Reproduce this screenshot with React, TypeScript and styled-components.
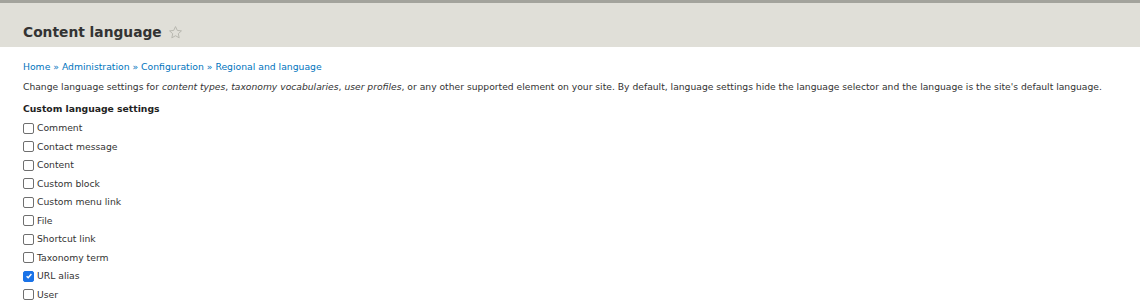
import styled, { createGlobalStyle } from "styled-components";

const GlobalStyle = createGlobalStyle`
  html, body {
    margin: 0;
    padding: 0;
    background: #fff;
  }
  body {
    font-family: "DejaVu Sans", Verdana, sans-serif;
    color: #333;
  }
`;

const Header = styled.header`
  height: 44px;
  border-top: 3px solid #a3a39c;
  background: #e0dfd8;
  display: flex;
  align-items: center;
  padding: 0 23px;
  box-sizing: content-box;
`;

const Title = styled.h1`
  margin: 0;
  padding-top: 14px;
  font-size: 13.8px;
  font-weight: 700;
  color: #333;
  display: flex;
  align-items: center;
  gap: 6px;
`;

const Star = styled.svg`
  width: 15px;
  height: 15px;
`;

const Main = styled.main`
  padding: 14px 23px 0;
`;

const Breadcrumb = styled.nav`
  font-size: 9.25px;
  line-height: 12px;
  color: #0074bd;

  a {
    color: #0074bd;
    text-decoration: none;
  }
`;

const Description = styled.p`
  margin: 8px 0 0;
  font-size: 9.2px;
  line-height: 12px;
  color: #333;
  white-space: nowrap;
`;

const FieldLabel = styled.h4`
  margin: 10px 0 7px;
  font-size: 9.25px;
  line-height: 12px;
  font-weight: 700;
  color: #222;
`;

const Options = styled.div`
  display: flex;
  flex-direction: column;
  gap: 6.5px;
`;

const Option = styled.label`
  display: flex;
  align-items: center;
  gap: 3px;
  font-size: 9.25px;
  line-height: 12px;
  color: #333;
`;

const Box = styled.span<{ $checked?: boolean }>`
  width: 9px;
  height: 9px;
  border-radius: 2px;
  border: 1px solid ${(p) => (p.$checked ? "#1a73e8" : "#6f6f6f")};
  background: ${(p) => (p.$checked ? "#1a73e8" : "#fff")};
  display: inline-flex;
  align-items: center;
  justify-content: center;

  svg {
    width: 8px;
    height: 8px;
  }
`;

const items: { label: string; checked?: boolean }[] = [
  { label: "Comment" },
  { label: "Contact message" },
  { label: "Content" },
  { label: "Custom block" },
  { label: "Custom menu link" },
  { label: "File" },
  { label: "Shortcut link" },
  { label: "Taxonomy term" },
  { label: "URL alias", checked: true },
  { label: "User" },
];

export default function App() {
  return (
    <>
      <GlobalStyle />
      <Header>
        <Title>
          Content language
          <Star viewBox="0 0 24 24" fill="none" stroke="#b8b8b0" strokeWidth="1.6" strokeLinejoin="round">
            <path d="M12 2.5l2.9 6.2 6.6.7-5 4.5 1.4 6.6L12 17.2l-5.9 3.3 1.4-6.6-5-4.5 6.6-.7z" />
          </Star>
        </Title>
      </Header>
      <Main>
        <Breadcrumb>
          <a href="#">Home</a> » <a href="#">Administration</a> » <a href="#">Configuration</a> »{" "}
          <a href="#">Regional and language</a>
        </Breadcrumb>
        <Description>
          Change language settings for <em>content types</em>, <em>taxonomy vocabularies</em>,{" "}
          <em>user profiles</em>, or any other supported element on your site. By default, language settings hide the
          language selector and the language is the site's default language.
        </Description>
        <FieldLabel>Custom language settings</FieldLabel>
        <Options>
          {items.map((it) => (
            <Option key={it.label}>
              <Box $checked={it.checked}>
                {it.checked && (
                  <svg viewBox="0 0 10 10" fill="none" stroke="#fff" strokeWidth="1.8">
                    <path d="M2 5.2l2 2 4-4.6" />
                  </svg>
                )}
              </Box>
              {it.label}
            </Option>
          ))}
        </Options>
      </Main>
    </>
  );
}
